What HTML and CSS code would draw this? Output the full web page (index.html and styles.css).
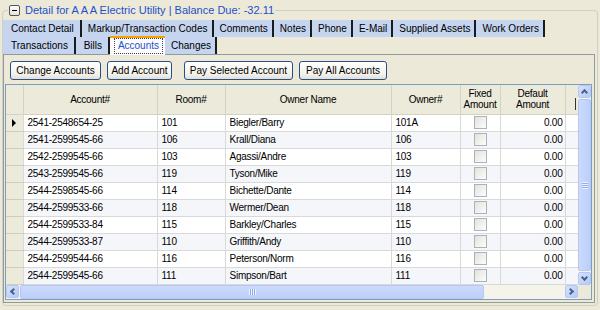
FILE: index.html
```html
<!DOCTYPE html>
<html lang="en">

<head>
    <meta charset="UTF-8">
    <meta name="viewport" content="width=device-width, initial-scale=1.0">
    <title>Detail for A A A Electric Utility</title>
    <link rel="stylesheet" href="styles.css">
</head>

<body>
    <fieldset class="detail">
        <legend class="detail-title"><span class="collapse-box"></span>Detail for A A A Electric Utility | Balance Due: -32.11</legend>
        <div class="tabs">
            <div class="tab-row">
                <div class="tab tab-wide">Contact Detail</div>
                <div class="tab">Markup/Transaction Codes</div>
                <div class="tab">Comments</div>
                <div class="tab">Notes</div>
                <div class="tab">Phone</div>
                <div class="tab">E-Mail</div>
                <div class="tab">Supplied Assets</div>
                <div class="tab">Work Orders</div>
            </div>
            <div class="tab-row">
                <div class="tab tab-wide">Transactions</div>
                <div class="tab">Bills</div>
                <div class="tab tab-active"><span>Accounts</span></div>
                <div class="tab">Changes</div>
            </div>
        </div>
        <div class="tab-panel">
            <div class="toolbar">
                <button class="xp-btn btn-change">Change Accounts</button>
                <button class="xp-btn btn-add">Add Account</button>
                <button class="xp-btn btn-pay-selected">Pay Selected Account</button>
                <button class="xp-btn btn-pay-all">Pay All Accounts</button>
            </div>
            <div class="grid">
                <div class="grid-body">
                    <table class="accounts">
                        <colgroup>
                            <col class="c-rowhead">
                            <col class="c-account">
                            <col class="c-room">
                            <col class="c-owner">
                            <col class="c-ownerno">
                            <col class="c-fixed">
                            <col class="c-default">
                            <col class="c-more">
                        </colgroup>
                        <thead>
                            <tr>
                                <th></th>
                                <th>Account#</th>
                                <th>Room#</th>
                                <th>Owner Name</th>
                                <th>Owner#</th>
                                <th>Fixed<br>Amount</th>
                                <th>Default<br>Amount</th>
                                <th><span class="col-cut"></span></th>
                            </tr>
                        </thead>
                        <tbody>
                            <tr><td class="row-head current"></td><td>2541-2548654-25</td><td>101</td><td>Biegler/Barry</td><td>101A</td><td class="chk"><span class="checkbox"></span></td><td class="num">0.00</td><td></td></tr>
                            <tr><td class="row-head"></td><td>2541-2599545-66</td><td>106</td><td>Krall/Diana</td><td>106</td><td class="chk"><span class="checkbox"></span></td><td class="num">0.00</td><td></td></tr>
                            <tr><td class="row-head"></td><td>2542-2599545-66</td><td>103</td><td>Agassi/Andre</td><td>103</td><td class="chk"><span class="checkbox"></span></td><td class="num">0.00</td><td></td></tr>
                            <tr><td class="row-head"></td><td>2543-2599545-66</td><td>119</td><td>Tyson/Mike</td><td>119</td><td class="chk"><span class="checkbox"></span></td><td class="num">0.00</td><td></td></tr>
                            <tr><td class="row-head"></td><td>2544-2598545-66</td><td>114</td><td>Bichette/Dante</td><td>114</td><td class="chk"><span class="checkbox"></span></td><td class="num">0.00</td><td></td></tr>
                            <tr><td class="row-head"></td><td>2544-2599533-66</td><td>118</td><td>Wermer/Dean</td><td>118</td><td class="chk"><span class="checkbox"></span></td><td class="num">0.00</td><td></td></tr>
                            <tr><td class="row-head"></td><td>2544-2599533-84</td><td>115</td><td>Barkley/Charles</td><td>115</td><td class="chk"><span class="checkbox"></span></td><td class="num">0.00</td><td></td></tr>
                            <tr><td class="row-head"></td><td>2544-2599533-87</td><td>110</td><td>Griffith/Andy</td><td>110</td><td class="chk"><span class="checkbox"></span></td><td class="num">0.00</td><td></td></tr>
                            <tr><td class="row-head"></td><td>2544-2599544-66</td><td>116</td><td>Peterson/Norm</td><td>116</td><td class="chk"><span class="checkbox"></span></td><td class="num">0.00</td><td></td></tr>
                            <tr><td class="row-head"></td><td>2544-2599545-66</td><td>111</td><td>Simpson/Bart</td><td>111</td><td class="chk"><span class="checkbox"></span></td><td class="num">0.00</td><td></td></tr>
                        </tbody>
                    </table>
                </div>
                <div class="vscroll">
                    <div class="sb-btn sb-up"></div>
                    <div class="sb-track"><div class="sb-thumb"><span class="grip"></span></div></div>
                    <div class="sb-btn sb-down"></div>
                </div>
                <div class="hscroll">
                    <div class="sb-btn sb-left"></div>
                    <div class="sb-track"><div class="sb-thumb"><span class="grip"></span></div></div>
                    <div class="sb-btn sb-right"></div>
                </div>
                <div class="sb-corner"></div>
            </div>
        </div>
    </fieldset>
</body>

</html>
```

FILE: styles.css
```css
body {
    margin: 0;
    background-color: #ece9d8;
    font-family: "Liberation Sans", Arial, sans-serif;
    font-size: 10px;
    color: #000;
}

.detail {
    margin: 3px 2px 0 2px;
    padding: 3px 2px 2px 0;
    border: 1px solid #d0d0bf;
    border-radius: 4px;
    height: 303px;
    box-sizing: border-box;
}

.detail-title {
    display: flex;
    align-items: center;
    gap: 5px;
    margin-left: 5px;
    padding: 0 1px;
    font-size: 11px;
    color: #1e50c8;
    line-height: 14px;
}

.collapse-box {
    position: relative;
    width: 9px;
    height: 9px;
    border: 1px solid #555;
    border-radius: 2px;
    background: linear-gradient(#fff, #e4e2d6);
}

.collapse-box::before {
    content: "";
    position: absolute;
    left: 2px;
    top: 4px;
    width: 5px;
    height: 1px;
    background: #000;
}

/* tabs */
.tab-row {
    display: flex;
    height: 17px;
}

.tab {
    min-width: 22px;
    background-color: #c5d5ef;
    padding: 0 4px 0 6px;
    line-height: 17px;
    text-align: center;
    border-right: 2px solid #1b1b1b;
    white-space: nowrap;
}

.tab-wide {
    padding: 0 6px 0 8px;
}

.tab-active {
    background-color: #fcfcfe;
    border-top: 2px solid #f6a200;
    border-right: none;
    color: #1e50c8;
    padding: 0 2px 0 4px;
    height: 19px;
    margin-top: -1px;
    box-sizing: border-box;
    position: relative;
    z-index: 1;
}

.tab-active span {
    display: block;
    line-height: 14px;
    padding: 0 3px;
    border: 1px dotted #444;
}

.tab-panel {
    border: 1px solid #919b9c;
    height: 249px;
    box-sizing: border-box;
    padding: 6px 0 0 0;
}

.toolbar {
    display: flex;
    gap: 6px;
    padding-left: 6px;
}

.xp-btn {
    font-family: inherit;
    font-size: 10px;
    height: 19px;
    padding: 0;
    border: 1px solid #2a4f86;
    border-radius: 3px;
    background: linear-gradient(#ffffff, #f3f2ec 70%, #e2e0d4);
    color: #000;
}

.btn-change { width: 91px; }
.btn-add { width: 65px; margin-right: 6px; }
.btn-pay-selected { width: 109px; }
.btn-pay-all { width: 88px; }

/* grid */
.grid {
    margin-top: 4px;
    margin-left: 1px;
    width: 587px;
    height: 216px;
    box-sizing: border-box;
    border: 1px solid #7f9db9;
    display: grid;
    grid-template-columns: minmax(0, 1fr) 13px;
    grid-template-rows: minmax(0, 1fr) 14px;
    background: #fff;
}

.grid-body {
    overflow: hidden;
    min-width: 0;
}

.accounts {
    border-collapse: collapse;
    table-layout: fixed;
    width: 659px;
    letter-spacing: -0.25px;
}

.c-rowhead { width: 17px; }
.c-account { width: 134px; }
.c-room { width: 68px; }
.c-owner { width: 166px; }
.c-ownerno { width: 69px; }
.c-fixed { width: 40px; }
.c-default { width: 65px; }
.c-more { width: 100px; }

.accounts th {
    height: 29px;
    padding: 0;
    font-weight: normal;
    line-height: 11px;
    background-color: #ebeadb;
    border-right: 1px solid #d6d2c2;
    border-bottom: 1px solid #d6d2c2;
    box-sizing: border-box;
    white-space: nowrap;
}

.col-cut {
    display: block;
    width: 1px;
    height: 12px;
    margin: 9px 0 0 9px;
    background-color: #333;
}

.accounts td {
    height: 17px;
    padding: 0 0 0 4px;
    border-right: 1px solid #d9d9d9;
    border-bottom: 1px solid #d9d9d9;
    white-space: nowrap;
    box-sizing: border-box;
}

.accounts tbody tr:nth-child(even) td {
    background-color: #f4f6fa;
}

.accounts td.row-head,
.accounts tbody tr:nth-child(even) td.row-head {
    background-color: #ebeadb;
    border-bottom-color: #cfccbc;
}

.accounts td.current {
    position: relative;
}

.accounts td.current::before {
    content: "";
    position: absolute;
    left: 6px;
    top: 4px;
    border-left: 4px solid #000;
    border-top: 4px solid transparent;
    border-bottom: 4px solid transparent;
}

.accounts td.num {
    text-align: right;
    padding: 0 2px 0 0;
}

.accounts td.chk {
    text-align: center;
    padding: 0;
}

.checkbox {
    display: inline-block;
    width: 11px;
    height: 11px;
    vertical-align: middle;
    border: 1px solid #a9b2bd;
    background: linear-gradient(135deg, #e3e2da, #fdfdfb);
}

/* scrollbars */
.vscroll,
.hscroll {
    display: flex;
    background-color: #f5f4ea;
}

.vscroll {
    flex-direction: column;
}

.sb-track {
    flex: 1;
    display: flex;
}

.vscroll .sb-track {
    flex-direction: column;
}

.sb-btn {
    width: 13px;
    height: 13px;
    flex: none;
    box-sizing: border-box;
    border: 1px solid #b5c8f5;
    border-radius: 2px;
    background: linear-gradient(135deg, #d6e2fd, #b4c9f8);
    position: relative;
}

.sb-btn::before {
    content: "";
    position: absolute;
    left: 3px;
    top: 3px;
    width: 3px;
    height: 3px;
    border-left: 2px solid #4d6185;
    border-top: 2px solid #4d6185;
}

.sb-up::before { transform: translate(0, 1px) rotate(45deg); }
.sb-down::before { transform: translate(0, -1px) rotate(225deg); }
.sb-left::before { transform: translate(1px, 0) rotate(-45deg); }
.sb-right::before { transform: translate(-1px, 0) rotate(135deg); }

.sb-thumb {
    display: flex;
    align-items: center;
    justify-content: center;
    box-sizing: border-box;
    border: 1px solid #b5c8f5;
    border-radius: 2px;
    background: linear-gradient(90deg, #cbdafc, #bccff8);
}

.vscroll .sb-thumb {
    height: 172px;
    margin-top: 1px;
}

.hscroll .sb-thumb {
    width: 464px;
    margin-left: 1px;
    background: linear-gradient(#cbdafc, #bccff8);
}

.grip {
    width: 6px;
    height: 7px;
    background: repeating-linear-gradient(#eef3fe 0 1px, #8faaf0 1px 2px);
}

.hscroll .grip {
    width: 7px;
    height: 6px;
    background: repeating-linear-gradient(90deg, #eef3fe 0 1px, #8faaf0 1px 2px);
}

.sb-corner {
    background-color: #ece9d8;
}
```
